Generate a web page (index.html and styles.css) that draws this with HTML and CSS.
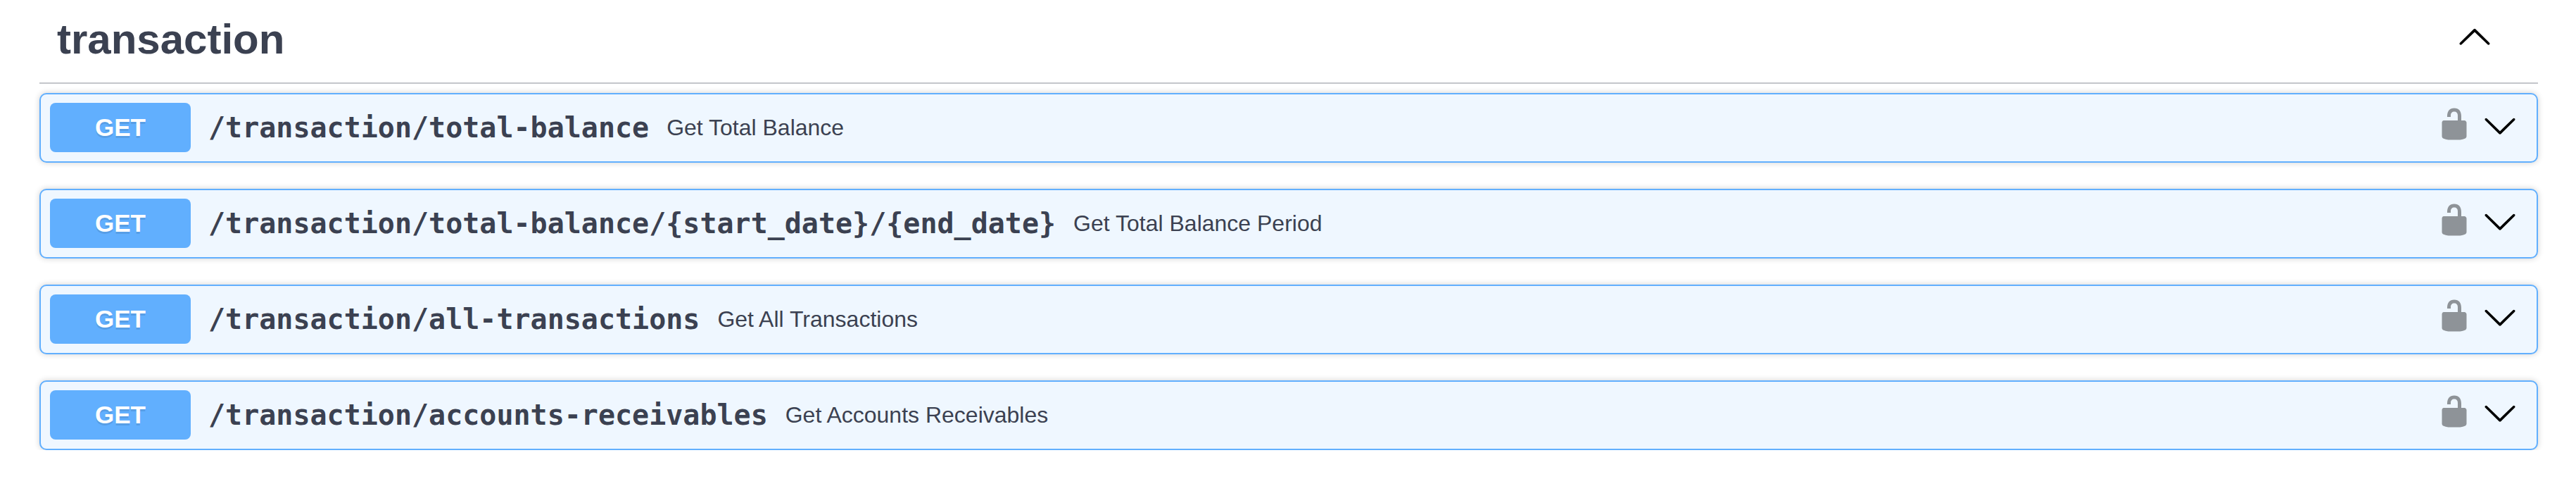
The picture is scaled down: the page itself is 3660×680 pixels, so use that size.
FILE: index.html
```
<!DOCTYPE html>
<html lang="en">
<head>
<meta charset="utf-8">
<title>transaction</title>
<link rel="stylesheet" href="styles.css">
</head>
<body>
<svg class="sprite" aria-hidden="true">
  <symbol id="arrow-up" viewBox="0 0 20 20"><path d="M17.418 14.908C17.69 15.176 18.127 15.176 18.397 14.908 18.667 14.64 18.668 14.207 18.397 13.939L10.489 6.109C10.219 5.841 9.782 5.841 9.51 6.109L1.602 13.939C1.332 14.207 1.332 14.64 1.602 14.908 1.873 15.176 2.311 15.176 2.581 14.908L10 7.767 17.418 14.908Z"/></symbol>
  <symbol id="arrow-down" viewBox="0 0 20 20"><path d="M17.418 6.109C17.69 5.841 18.127 5.841 18.397 6.109 18.667 6.377 18.668 6.81 18.397 7.078L10.489 14.908C10.219 15.176 9.782 15.176 9.51 14.908L1.602 7.078C1.332 6.81 1.332 6.377 1.602 6.109 1.873 5.841 2.311 5.841 2.581 6.109L10 13.25 17.418 6.109Z"/></symbol>
  <symbol id="unlocked" viewBox="0 0 20 20"><path d="M15.8 8H14V5.6C14 2.703 12.665 1 10 1 7.334 1 6 2.703 6 5.6V6h2v-.801C8 3.754 8.797 3 10 3c1.203 0 2 .754 2 2.199V8H4c-.553 0-1 .646-1 1.199V17c0 .549.428 1.139.951 1.307l1.197.387C5.672 18.861 6.55 19 7.1 19h5.8c.549 0 1.428-.139 1.951-.307l1.196-.387c.524-.167.953-.757.953-1.306V9.199C17 8.646 16.352 8 15.8 8z"/></symbol>
</svg>
<main class="tag-section">
  <header class="tag-header">
    <h3 class="tag-title"><a href="#transaction">transaction</a></h3>
    <button class="icon-button" type="button" aria-label="Collapse operation"><svg class="icon"><use href="#arrow-up"/></svg></button>
  </header>
  <div class="operations">
    <div class="opblock">
      <button class="opblock-summary" type="button"><span class="method">GET</span><span class="path">/transaction/total-balance</span><span class="description">Get Total Balance</span></button>
      <button class="icon-button lock" type="button" aria-label="Authorization button unlocked"><svg class="icon"><use href="#unlocked"/></svg></button>
      <button class="icon-button" type="button" aria-label="Expand operation"><svg class="icon"><use href="#arrow-down"/></svg></button>
    </div>
    <div class="opblock">
      <button class="opblock-summary" type="button"><span class="method">GET</span><span class="path">/transaction/total-balance/{start_date}/{end_date}</span><span class="description">Get Total Balance Period</span></button>
      <button class="icon-button lock" type="button" aria-label="Authorization button unlocked"><svg class="icon"><use href="#unlocked"/></svg></button>
      <button class="icon-button" type="button" aria-label="Expand operation"><svg class="icon"><use href="#arrow-down"/></svg></button>
    </div>
    <div class="opblock">
      <button class="opblock-summary" type="button"><span class="method">GET</span><span class="path">/transaction/all-transactions</span><span class="description">Get All Transactions</span></button>
      <button class="icon-button lock" type="button" aria-label="Authorization button unlocked"><svg class="icon"><use href="#unlocked"/></svg></button>
      <button class="icon-button" type="button" aria-label="Expand operation"><svg class="icon"><use href="#arrow-down"/></svg></button>
    </div>
    <div class="opblock">
      <button class="opblock-summary" type="button"><span class="method">GET</span><span class="path">/transaction/accounts-receivables</span><span class="description">Get Accounts Receivables</span></button>
      <button class="icon-button lock" type="button" aria-label="Authorization button unlocked"><svg class="icon"><use href="#unlocked"/></svg></button>
      <button class="icon-button" type="button" aria-label="Expand operation"><svg class="icon"><use href="#arrow-down"/></svg></button>
    </div>
  </div>
</main>
</body>
</html>
```
FILE: styles.css
```
* {
  box-sizing: border-box;
}

body {
  margin: 0;
  background: #fff;
  color: #3b4151;
  font-family: "Liberation Sans", Arial, sans-serif;
}

.sprite {
  display: none;
}

button {
  margin: 0;
  padding: 0;
  border: 0;
  background: none;
  color: inherit;
  font: inherit;
  cursor: pointer;
}

.tag-section {
  padding: 0 54px 0 56px;
}

.tag-header {
  display: flex;
  align-items: center;
  justify-content: space-between;
  padding: 18px 65px 24px 25px;
  border-bottom: 2px solid rgba(59, 65, 81, 0.3);
}

.tag-title {
  margin: 0;
  font-size: 60px;
  line-height: 75px;
}

.tag-title a {
  color: inherit;
  text-decoration: none;
}

.icon-button {
  display: flex;
  padding-bottom: 6px;
}

.tag-header .icon-button,
.lock {
  padding-bottom: 10px;
}

.icon {
  width: 50px;
  height: 50px;
  fill: #000;
}

.lock .icon {
  opacity: 0.4;
}

.operations {
  display: flex;
  flex-direction: column;
  gap: 37px;
  padding-top: 13px;
}

.opblock {
  display: flex;
  align-items: center;
  gap: 15px;
  padding: 12px 27px 13px 13px;
  border: 2px solid #61affe;
  border-radius: 10px;
  background: #eff7ff;
  box-shadow: 0 0 8px rgba(0, 0, 0, 0.19);
}

.opblock-summary {
  display: flex;
  flex: 1;
  align-items: center;
  min-width: 0;
  text-align: left;
}

.method {
  min-width: 200px;
  border-radius: 8px;
  background: #61affe;
  color: #fff;
  font-size: 35px;
  font-weight: 700;
  line-height: 70px;
  text-align: center;
  text-shadow: 0 3px 0 rgba(0, 0, 0, 0.1);
}

.path {
  padding: 0 25px;
  font-family: "DejaVu Sans Mono", monospace;
  font-size: 40px;
  font-weight: 700;
  line-height: 48px;
}

.description {
  font-size: 32px;
  line-height: 40px;
}
```
